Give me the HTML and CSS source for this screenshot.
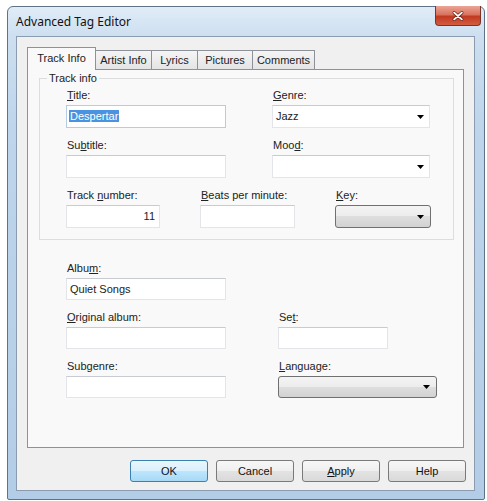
FILE: index.html
```html
<!DOCTYPE html>
<html>
<head>
<meta charset="utf-8">
<title>Advanced Tag Editor</title>
<link rel="stylesheet" href="styles.css">
</head>
<body>
<div class="desk">
  <div class="window">
    <div class="titlebar">
      <span class="title">Advanced Tag Editor</span>
      <div class="close">
        <svg width="46" height="20" viewBox="0 0 46 20"><path d="M19 6.5 L27 13.5 M27 6.5 L19 13.5" stroke="#6a2418" stroke-width="3.4" stroke-linecap="round"/><path d="M19 6.5 L27 13.5 M27 6.5 L19 13.5" stroke="#fff" stroke-width="2" stroke-linecap="round"/></svg>
      </div>
    </div>
    <div class="client">
      <div class="tabs">
        <div class="tab active">Track Info</div>
        <div class="tab">Artist Info</div>
        <div class="tab">Lyrics</div>
        <div class="tab">Pictures</div>
        <div class="tab">Comments</div>
      </div>
      <div class="panel">
        <div class="group">
          <span class="group-title">Track info</span>
          <div class="grid2">
            <div class="field">
              <label><u>T</u>itle:</label>
              <div class="box edit focus"><span class="sel">Despertar</span></div>
            </div>
            <div class="field">
              <label><u>G</u>enre:</label>
              <div class="box combo"><span>Jazz</span><svg width="7" height="4" viewBox="0 0 7 4"><path d="M0 0h7L3.5 4z" fill="#000"/></svg></div>
            </div>
            <div class="field">
              <label>Su<u>b</u>title:</label>
              <div class="box edit"></div>
            </div>
            <div class="field">
              <label>Moo<u>d</u>:</label>
              <div class="box combo"><span></span><svg width="7" height="4" viewBox="0 0 7 4"><path d="M0 0h7L3.5 4z" fill="#000"/></svg></div>
            </div>
          </div>
          <div class="grid3">
            <div class="field">
              <label>Track <u>n</u>umber:</label>
              <div class="box edit num">11</div>
            </div>
            <div class="field">
              <label><u>B</u>eats per minute:</label>
              <div class="box edit"></div>
            </div>
            <div class="field">
              <label><u>K</u>ey:</label>
              <div class="box drop"><span></span><svg width="7" height="4" viewBox="0 0 7 4"><path d="M0 0h7L3.5 4z" fill="#000"/></svg></div>
            </div>
          </div>
        </div>
        <div class="lower">
          <div class="field">
            <label>Albu<u>m</u>:</label>
            <div class="box short edit">Quiet Songs</div>
          </div>
          <div class="field first">
            <label><u>O</u>riginal album:</label>
            <div class="box short edit"></div>
          </div>
          <div class="field">
            <label>Se<u>t</u>:</label>
            <div class="box short edit w110"></div>
          </div>
          <div class="field">
            <label>Subgenre:</label>
            <div class="box short edit"></div>
          </div>
          <div class="field">
            <label><u>L</u>anguage:</label>
            <div class="box short drop"><span></span><svg width="7" height="4" viewBox="0 0 7 4"><path d="M0 0h7L3.5 4z" fill="#000"/></svg></div>
          </div>
        </div>
      </div>
      <div class="buttons">
        <button class="btn default">OK</button>
        <button class="btn">Cancel</button>
        <button class="btn"><u>A</u>pply</button>
        <button class="btn">Help</button>
      </div>
    </div>
  </div>
</div>
</body>
</html>
```
FILE: styles.css
```css
* { box-sizing: border-box; }
body {
  margin: 0;
  background: #ffffff;
  font-family: "Liberation Sans", Arial, sans-serif;
  font-size: 11px;
  color: #222222;
}
u { text-decoration: underline; }
.desk { padding: 6px 0 0 7px; }
.window {
  width: 478px;
  height: 494px;
  border: 1px solid #5f7287;
  border-radius: 6px 6px 2px 2px;
  background: linear-gradient(to bottom, #e1ecf7 0px, #cddff0 29px, #bed5eb 120px, #b4cde6 100%);
  padding: 0 9px 8px 8px;
  display: flex;
  flex-direction: column;
}
.titlebar {
  height: 29px;
  display: flex;
  justify-content: space-between;
  align-items: center;
}
.title {
  font-family: "Noto Sans", "Open Sans", sans-serif;
  font-size: 12px;
  color: #111;
  margin-top: -1px;
}
.close {
  align-self: flex-start;
  margin-top: -1px;
  margin-right: -6px;
  width: 46px;
  height: 20px;
  border: 1px solid #7a3428;
  border-top: none;
  border-radius: 0 0 4px 4px;
  background: linear-gradient(to bottom, #eaa596 0%, #d9735e 45%, #c23a22 55%, #d25c40 100%);
  display: flex;
}
.close svg { display: block; }
.client {
  flex: 1;
  border: 1px solid #8b9cb0;
  background: #f0f0f0;
  padding: 10px 8px 8px 10px;
  display: flex;
  flex-direction: column;
}
.tabs {
  height: 22px;
  display: grid;
  grid-template-columns: 69px 56px 46px 55px 62px;
  align-items: end;
}
.tab {
  height: 19px;
  border-top: 1px solid #8e9197;
  border-right: 1px solid #8e9197;
  background: linear-gradient(to bottom, #f5f5f5, #e4e4e4);
  text-align: center;
  line-height: 18px;
  white-space: nowrap;
}
.tab.active {
  height: 23px;
  margin-bottom: -1px;
  border-left: 1px solid #8e9197;
  background: #f9f9f9;
  position: relative;
  z-index: 1;
  line-height: 21px;
}
.panel {
  height: 379px;
  margin-right: 2px;
  border: 1px solid #8e9197;
  background: #f9f9f9;
}
.group {
  position: relative;
  margin: 8px 9px 0 11px;
  border: 1px solid #dddddd;
  padding: 10px 0 11px 26px;
}
.group-title {
  position: absolute;
  top: -7px;
  left: 7px;
  padding: 0 2px;
  line-height: 13px;
  background: #f9f9f9;
}
.grid2 {
  display: grid;
  grid-template-columns: 160px 158px;
  column-gap: 46px;
  row-gap: 11px;
}
.grid3 {
  margin-top: 11px;
  display: grid;
  grid-template-columns: 94px 95px 96px;
  column-gap: 40px;
}
.field label {
  display: block;
  line-height: 13px;
  margin-bottom: 3px;
  padding-left: 1px;
  white-space: nowrap;
}
.box {
  height: 23px;
  width: 100%;
  line-height: 21px;
  white-space: nowrap;
}
.box.short { height: 22px; line-height: 20px; }
.edit {
  background: #ffffff;
  border: 1px solid #e3e5ea;
  border-top-color: #c8cbd2;
  padding: 0 3px;
}
.edit.focus {
  border-color: #b5cde3;
  padding-left: 2px;
}
.sel {
  background: #4a93e0;
  color: #ffffff;
  padding: 0 1px;
}
.num { text-align: right; padding-right: 4px; }
.combo {
  background: #ffffff;
  border: 1px solid #e3e5ea;
  border-top-color: #c8cbd2;
  display: flex;
  align-items: center;
  justify-content: space-between;
  padding: 0 5px 0 3px;
}
.drop {
  border: 1px solid #707070;
  border-radius: 3px;
  background: linear-gradient(to bottom, #f4f4f4 0%, #ececec 50%, #dedede 50%, #d2d2d2 100%);
  display: flex;
  align-items: center;
  justify-content: space-between;
  padding: 0 6px 0 3px;
}
.lower {
  margin: 22px 0 0 38px;
  display: grid;
  grid-template-columns: 160px 159px;
  column-gap: 52px;
  row-gap: 11px;
}
.lower .first { grid-column-start: 1; }
.w110 { width: 110px; }
.buttons {
  margin-top: 12px;
  display: flex;
  justify-content: flex-end;
  gap: 8px;
}
.btn {
  width: 78px;
  height: 22px;
  font-family: "Liberation Sans", Arial, sans-serif;
  font-size: 11px;
  color: #111;
  border: 1px solid #7a7a7a;
  border-radius: 3px;
  background: linear-gradient(to bottom, #f7f7f7 0%, #efefef 50%, #e3e3e3 50%, #d9d9d9 100%);
  padding: 0;
}
.btn.default {
  border-color: #3c7fb1;
  background: linear-gradient(to bottom, #eaf6fd 0%, #d9f0fc 50%, #bee6fd 50%, #a7d9f5 100%);
}
```
